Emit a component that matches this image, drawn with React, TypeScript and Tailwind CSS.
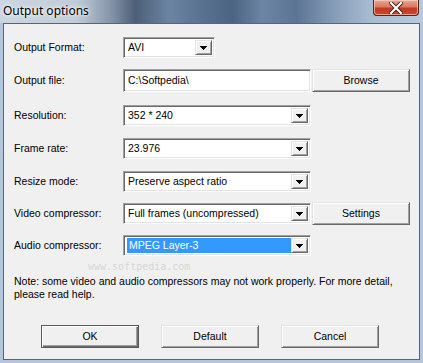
import React from "react";

const sunken =
  "border border-t-[#a0a0a0] border-l-[#a0a0a0] border-r-white border-b-white shadow-[inset_1px_1px_0_#696969,inset_-1px_-1px_0_#e3e3e3]";
const raised =
  "border border-t-[#e3e3e3] border-l-[#e3e3e3] border-r-[#696969] border-b-[#696969] shadow-[inset_1px_1px_0_#ffffff,inset_-1px_-1px_0_#a0a0a0] bg-[#f0f0f0]";

function Arrow() {
  return (
    <svg width="7" height="4" viewBox="0 0 7 4" shapeRendering="crispEdges">
      <rect x="0" y="0" width="7" height="1" fill="#000" />
      <rect x="1" y="1" width="5" height="1" fill="#000" />
      <rect x="2" y="2" width="3" height="1" fill="#000" />
      <rect x="3" y="3" width="1" height="1" fill="#000" />
    </svg>
  );
}

function Combo({ value, width, selected }: { value: string; width: string; selected?: boolean }) {
  return (
    <div className={`${sunken} ${width} h-[21px] bg-white flex items-stretch p-[2px]`}>
      <div className="flex-1 flex items-center min-w-0">
        {selected ? (
          <span className="ml-[1px] h-[15px] w-full bg-[#3399ff] text-white flex items-center pl-[2px] whitespace-nowrap">
            {value}
          </span>
        ) : (
          <span className="pl-[2px] text-black whitespace-nowrap overflow-hidden">{value}</span>
        )}
      </div>
      <div className={`${raised} w-[17px] flex items-center justify-center`}>
        <Arrow />
      </div>
    </div>
  );
}

function Row({
  label,
  className,
  children,
}: {
  label: string;
  className: string;
  children: React.ReactNode;
}) {
  return (
    <div className={`flex items-center pl-[10px] ${className}`}>
      <span className="w-[109px] shrink-0 text-black">{label}</span>
      {children}
    </div>
  );
}

function Button({ text, isDefault, className }: { text: string; isDefault?: boolean; className?: string }) {
  return (
    <div
      className={`h-[23px] w-[98px] flex items-center justify-center text-black ${
        isDefault
          ? "border border-[#5a5a5a] bg-[#f0f0f0] shadow-[inset_1px_1px_0_#ffffff,inset_-1px_-1px_0_#696969,inset_-2px_-2px_0_#a0a0a0]"
          : raised
      } ${className ?? ""}`}
    >
      {text}
    </div>
  );
}

export default function App() {
  return (
    <div className="w-[423px] h-[363px] flex flex-col overflow-hidden bg-[#b3c6dc] font-['Liberation_Sans',Arial,sans-serif] text-[10.5px]">
      <div className="h-[23px] shrink-0 flex items-start bg-[linear-gradient(90deg,#cbd6e2_0%,#c0ccd8_18%,#8797aa_26%,#4d5f77_32%,#6a84a2_40%,#58718f_48%,#4a6482_55%,#6c85a3_62%,#5c7595_70%,#8aa1bb_80%,#a9bcd2_88%,#b7c9dd_100%)]">
        <span className="ml-[3px] mt-[2px] text-[12px] leading-[17px] text-black font-['Noto_Sans',sans-serif] [text-shadow:0_0_6px_#ffffff,0_0_3px_#ffffff]">
          Output options
        </span>
        <div className="ml-auto mr-[4px] w-[46px] h-[16px] rounded-b-[4px] border border-t-0 border-[#5a2119] bg-[linear-gradient(180deg,#e8a593_0%,#d67a63_45%,#c23a22_55%,#c9472c_100%)] shadow-[inset_0_0_0_1px_rgba(255,220,210,0.6)] flex items-center justify-center">
          <svg width="14" height="12" viewBox="0 0 14 12">
            <path d="M2 1 L12 11 M12 1 L2 11" stroke="#3a1a14" strokeWidth="4" strokeLinecap="square" />
            <path d="M2 1 L12 11 M12 1 L2 11" stroke="#ffffff" strokeWidth="2.2" strokeLinecap="square" />
          </svg>
        </div>
      </div>

      <div className="flex-1 mx-[3px] mb-[3px] border border-[#56667a] bg-[#f0f0f0] flex flex-col">
        <Row label="Output Format:" className="mt-[13px] h-[21px]">
          <Combo value="AVI" width="w-[92px]" />
        </Row>
        <Row label="Output file:" className="mt-[11px] h-[23px]">
          <div className={`${sunken} w-[188px] h-[23px] bg-white flex items-center pl-[4px]`}>C:\Softpedia\</div>
          <Button text="Browse" className="ml-[1px]" />
        </Row>
        <Row label="Resolution:" className="mt-[13px] h-[21px]">
          <Combo value="352 * 240" width="w-[188px]" />
        </Row>
        <Row label="Frame rate:" className="mt-[12px] h-[21px]">
          <Combo value="23.976" width="w-[188px]" />
        </Row>
        <Row label="Resize mode:" className="mt-[12px] h-[21px]">
          <Combo value="Preserve aspect ratio" width="w-[188px]" />
        </Row>
        <Row label="Video compressor:" className="mt-[10px] h-[23px]">
          <Combo value="Full frames (uncompressed)" width="w-[188px]" />
          <Button text="Settings" className="ml-[1px]" />
        </Row>
        <Row label="Audio compressor:" className="mt-[10px] h-[21px]">
          <Combo value="MPEG Layer-3" width="w-[188px]" selected />
        </Row>

        <div className="mt-[5px] h-[12px] pl-[84px] text-[10px] leading-[12px] text-[#d6d6d6] font-['DejaVu_Sans_Mono',monospace]">
          www.softpedia.com
        </div>
        <p className="mt-[2px] pl-[10px] pr-[8px] leading-[13px] text-black">
          Note: some video and audio compressors may not work properly. For more detail,
          <br />
          please read help.
        </p>

        <div className="mt-[24px] flex gap-[22px] pl-[37px]">
          <Button text="OK" isDefault />
          <Button text="Default" />
          <Button text="Cancel" />
        </div>
      </div>
    </div>
  );
}
